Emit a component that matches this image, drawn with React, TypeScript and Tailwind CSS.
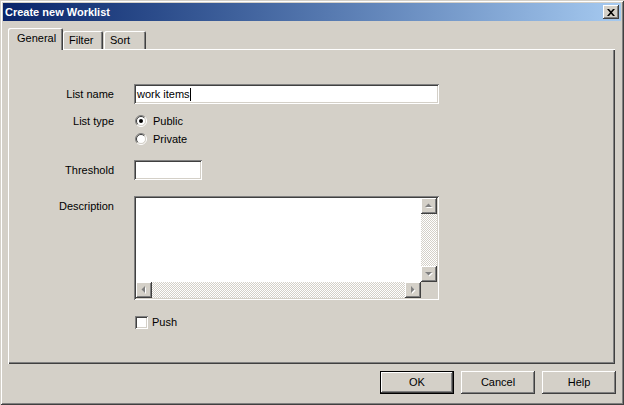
import React from 'react';

// Win2000 style dialog: "Create new Worklist"

const raised =
  'shadow-[inset_-1px_-1px_#404040,inset_1px_1px_#ffffff,inset_-2px_-2px_#808080,inset_2px_2px_#d4d0c8]';
const sunken =
  'shadow-[inset_1px_1px_#808080,inset_-1px_-1px_#ffffff,inset_2px_2px_#404040,inset_-2px_-2px_#d4d0c8]';
const checker =
  'bg-[repeating-conic-gradient(#d4d0c8_0%_25%,#ffffff_0%_50%)] bg-[length:2px_2px]';

type Dir = 'up' | 'down' | 'left' | 'right';

function Arrow({ dir }: { dir: Dir }) {
  const pts: Record<Dir, string> = {
    up: '4,9 11,9 7.5,5.5',
    down: '4,6 11,6 7.5,9.5',
    left: '9,4 9,11 5.5,7.5',
    right: '6,4 6,11 9.5,7.5',
  };
  return (
    <svg width="16" height="16" viewBox="0 0 16 16" className="block">
      <polygon points={pts[dir]} fill="#ffffff" transform="translate(1 1)" />
      <polygon points={pts[dir]} fill="#808080" />
    </svg>
  );
}

function ScrollButton({ dir }: { dir: Dir }) {
  return (
    <div className={`w-[16px] h-[16px] bg-[#d4d0c8] ${raised}`}>
      <Arrow dir={dir} />
    </div>
  );
}

function Radio({ checked, label }: { checked?: boolean; label: string }) {
  return (
    <div className="h-[18px] flex items-center">
      <svg width="12" height="12" viewBox="0 0 12 12" className="ml-[1px] block">
        <circle cx="6" cy="6" r="4.5" fill="#ffffff" />
        <path d="M2.1 9.9 A5.5 5.5 0 0 1 9.9 2.1" stroke="#808080" fill="none" />
        <path d="M9.9 2.1 A5.5 5.5 0 0 1 2.1 9.9" stroke="#ffffff" fill="none" />
        <path d="M2.8 9.2 A4.5 4.5 0 0 1 9.2 2.8" stroke="#404040" fill="none" />
        <path d="M9.2 2.8 A4.5 4.5 0 0 1 2.8 9.2" stroke="#d4d0c8" fill="none" />
        {checked && <circle cx="6" cy="6" r="2" fill="#000000" />}
      </svg>
      <span className="ml-[6px]">{label}</span>
    </div>
  );
}

function Button({ label, isDefault }: { label: string; isDefault?: boolean }) {
  return (
    <button
      className={
        'w-[75px] h-[23px] bg-[#d4d0c8] flex items-center justify-center ' +
        (isDefault
          ? 'shadow-[inset_0_0_0_1px_#000000,inset_-2px_-2px_#404040,inset_2px_2px_#ffffff,inset_-3px_-3px_#808080]'
          : raised)
      }
    >
      {label}
    </button>
  );
}

export default function App() {
  return (
    <div
      className="w-[624px] h-[405px] bg-[#d4d0c8] flex flex-col p-[3px] text-[11px] leading-[13px] text-black shadow-[inset_1px_1px_#d4d0c8,inset_-1px_-1px_#404040,inset_2px_2px_#ffffff,inset_-2px_-2px_#808080]"
      style={{ fontFamily: '"Liberation Sans", Arial, sans-serif' }}
    >
      {/* Title bar */}
      <div className="h-[18px] flex items-center justify-between bg-gradient-to-r from-[#0a246a] to-[#a6caf0] pl-[2px] pr-[2px]">
        <span className="font-bold text-white text-[11px]">Create new Worklist</span>
        <div className={`w-[16px] h-[14px] bg-[#d4d0c8] ${raised} flex items-center justify-center`}>
          <svg width="8" height="7" viewBox="0 0 8 7" className="block">
            <path d="M0 0h2l2 2.3L6 0h2L5 3.5 8 7H6L4 4.7 2 7H0l3-3.5z" fill="#000000" />
          </svg>
        </div>
      </div>

      <div className="flex flex-col pl-[5px] pr-[6px]">
        {/* Tabs */}
        <div className="mt-[7px] h-[21px] flex items-end">
          <div className="relative z-10 mb-[-1px] w-[55px] h-[22px] bg-[#d4d0c8] rounded-t-[2px] flex items-center pl-[9px] pb-[1px] shadow-[inset_1px_1px_#ffffff,inset_-1px_0_#404040,inset_-2px_0_#808080]">
            General
          </div>
          <div className="w-[40px] h-[18px] rounded-t-[2px] flex items-center pl-[6px] shadow-[inset_1px_1px_#ffffff,inset_-1px_0_#404040,inset_-2px_0_#808080]">
            Filter
          </div>
          <div className="ml-[1px] w-[42px] h-[18px] rounded-t-[2px] flex items-center pl-[6px] shadow-[inset_1px_1px_#ffffff,inset_-1px_0_#404040,inset_-2px_0_#808080]">
            Sort
          </div>
        </div>

        {/* Tab panel */}
        <div className="h-[315px] w-[607px] flex flex-col pt-[35px] shadow-[inset_1px_1px_#ffffff,inset_-1px_-1px_#404040,inset_-2px_-2px_#808080]">
          <div className="flex items-center h-[20px]">
            <div className="w-[106px] text-right">List name</div>
            <div className={`ml-[20px] w-[305px] h-[20px] bg-white ${sunken} flex items-center pl-[3px]`}>
              <span>work items</span>
              <span className="w-px h-[13px] bg-black" />
            </div>
          </div>

          <div className="flex mt-[8px]">
            <div className="w-[106px] h-[18px] flex items-center justify-end">List type</div>
            <div className="ml-[20px] flex flex-col">
              <Radio checked label="Public" />
              <Radio label="Private" />
            </div>
          </div>

          <div className="flex items-center h-[20px] mt-[12px]">
            <div className="w-[106px] text-right">Threshold</div>
            <div className={`ml-[20px] w-[68px] h-[20px] bg-white ${sunken}`} />
          </div>

          <div className="flex mt-[16px]">
            <div className="w-[106px] text-right pt-[4px]">Description</div>
            <div className={`ml-[20px] w-[305px] h-[104px] p-[2px] bg-white ${sunken}`}>
              <div className="w-full h-full grid grid-cols-[1fr_16px] grid-rows-[1fr_16px]">
                <div className="bg-white" />
                <div className="flex flex-col">
                  <ScrollButton dir="up" />
                  <div className={`flex-1 ${checker}`} />
                  <ScrollButton dir="down" />
                </div>
                <div className="flex">
                  <ScrollButton dir="left" />
                  <div className={`flex-1 ${checker}`} />
                  <ScrollButton dir="right" />
                </div>
                <div className="bg-[#d4d0c8]" />
              </div>
            </div>
          </div>

          <div className="flex items-center h-[13px] mt-[16px]">
            <div className="w-[106px]" />
            <div className={`ml-[21px] w-[13px] h-[13px] bg-white ${sunken}`} />
            <span className="ml-[4px]">Push</span>
          </div>
        </div>

        {/* Buttons */}
        <div className="mt-[7px] flex justify-end gap-[7px] mr-[-1px] [&>button]:w-[74px]">
          <Button label="OK" isDefault />
          <Button label="Cancel" />
          <Button label="Help" />
        </div>
      </div>
    </div>
  );
}
